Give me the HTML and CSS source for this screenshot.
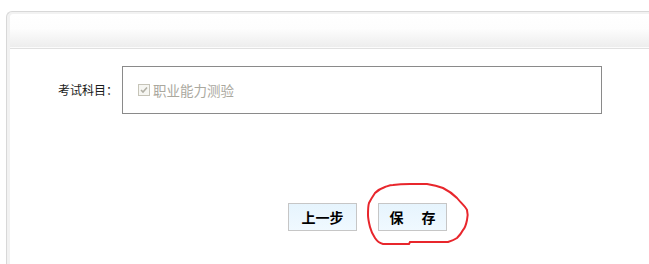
FILE: index.html
```html
<!DOCTYPE html>
<html lang="zh-CN">
<head>
<meta charset="utf-8">
<title>考试科目</title>
<link rel="stylesheet" href="styles.css">
</head>
<body>
<div class="panel">
  <div class="inner">
    <div class="head"></div>
    <div class="content">
      <div class="form-row">
        <div class="label">考试科目：</div>
        <div class="field">
          <span class="checkbox">
            <svg width="8" height="8" viewBox="0 0 8 8"><path d="M1 4 L3 6 L7 1.5" fill="none" stroke="#b2b0a6" stroke-width="1.6"/></svg>
          </span>
          <span class="option">职业能力测验</span>
        </div>
      </div>
      <div class="actions">
        <button class="btn">上一步</button>
        <button class="btn"><span class="spaced">保</span>存</button>
      </div>
    </div>
  </div>
</div>
<svg class="mark" width="649" height="264" viewBox="0 0 649 264">
  <path d="M393 185 C400 184 405 184 410 184 L427 184 C434 185 438 186 443 188 C449 191 453 194 457 198 C461 203 465 206 467 210 C468 214 468 217 467 220 C466 225 465 228 463 230 C461 234 459 236 457 238 C454 240 451 241 448 242 L427 242 L410 242 L409 244 L383 244 C379 243 377 241 375 238 C373 235 371 231 370 227 C369 223 368 219 368 215 C368 210 368 206 369 203 C371 199 373 196 375 193 C378 190 382 188 385 187 C388 186 390 185 393 185 Z" fill="none" stroke="#e8262c" stroke-width="2"/>
</svg>
</body>
</html>
```
FILE: styles.css
```css
html, body {
  margin: 0;
  padding: 0;
  height: 100%;
  overflow: hidden;
  background: #fff;
}
body {
  font-family: "Noto Sans CJK SC", "Liberation Sans", sans-serif;
  font-size: 12px;
  color: #222;
}
.panel {
  margin: 11px 0 0 6px;
  height: calc(100% - 11px);
  box-sizing: border-box;
  border-top: 1px solid #d8d8d8;
  border-left: 1px solid #d8d8d8;
  border-top-left-radius: 6px;
  background: #f2f2f2;
  padding: 2px 0 0 3px;
}
.inner {
  height: 100%;
  background: #fff;
  border-top-left-radius: 4px;
}
.head {
  height: 33px;
  background: linear-gradient(#ffffff 0%, #fdfdfd 45%, #ededed 100%);
  border-bottom: 1px solid #fbfbfb;
  border-top-left-radius: 4px;
}
.content {
  border-top: 1px solid #e0e0e0;
  padding-top: 17px;
}
.form-row {
  display: flex;
  align-items: center;
}
.label {
  width: 108px;
  text-align: right;
  margin-right: 4px;
  line-height: 16px;
  color: #1a1a1a;
}
.field {
  width: 480px;
  height: 48px;
  box-sizing: border-box;
  border: 1px solid #8a8a8a;
  display: flex;
  align-items: center;
  padding-left: 15px;
}
.checkbox {
  width: 12px;
  height: 12px;
  box-sizing: border-box;
  border: 1px solid #c6c4b8;
  background: #f6f6f2;
  display: flex;
  align-items: center;
  justify-content: center;
  margin-right: 3px;
}
.option {
  font-size: 13.5px;
  color: #aaa89e;
  line-height: 16px;
}
.actions {
  display: flex;
  gap: 21px;
  padding-left: 278px;
  margin-top: 89px;
}
.btn {
  width: 69px;
  height: 28px;
  box-sizing: border-box;
  border: 1px solid #c6c6c6;
  background: linear-gradient(#e6f4fd, #f0f9ff);
  font-family: "Noto Sans CJK SC", sans-serif;
  font-size: 14px;
  font-weight: bold;
  color: #000;
  padding: 0;
  line-height: 26px;
  text-align: center;
}
.spaced {
  margin-right: 18px;
}
.mark {
  position: absolute;
  left: 0;
  top: 0;
  pointer-events: none;
}
```
